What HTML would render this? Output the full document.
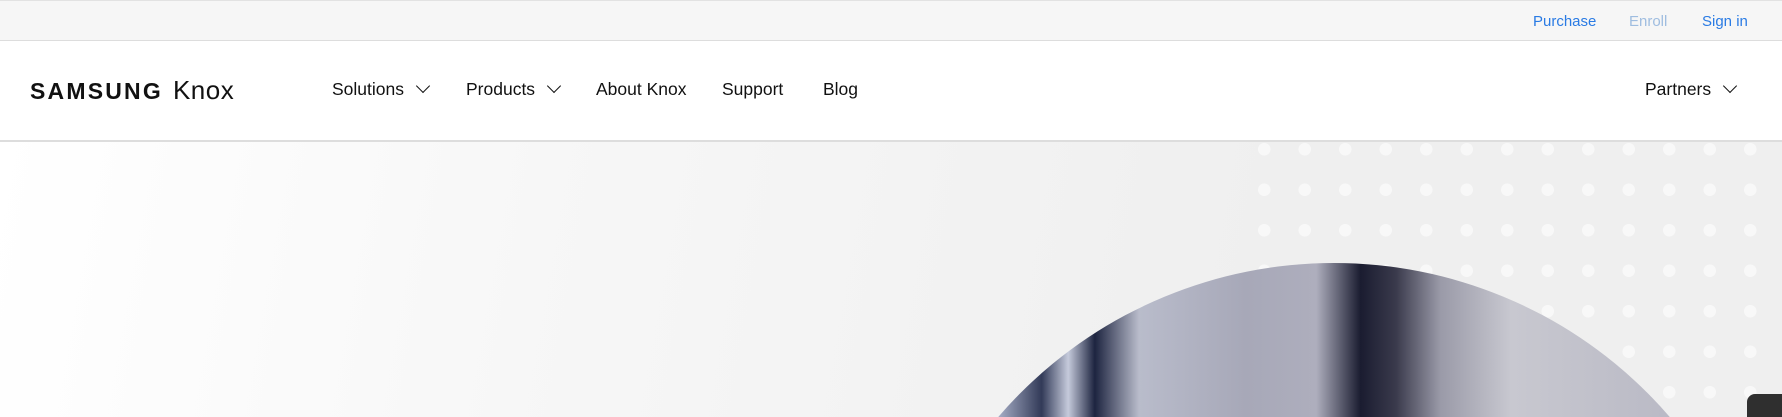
<!DOCTYPE html>
<html><head><meta charset="utf-8"><style>
*{margin:0;padding:0;box-sizing:border-box}
html,body{width:1782px;height:417px;overflow:hidden}
body{font-family:"Liberation Sans",sans-serif;position:relative;background:#fff}
.top{position:absolute;left:0;top:0;width:1782px;height:41px;background:#f6f6f6;border-top:1px solid #e2e2e2;border-bottom:1px solid #ddd}
.top span{position:absolute;top:12px;font-size:15px;color:#2a7be4}
.nav{position:absolute;left:0;top:41px;width:1782px;height:101px;background:#fff;border-bottom:2px solid #ddd}
.nav .it{position:absolute;top:38px;font-size:17.5px;color:#111}
.chev{display:inline-block;width:10px;height:10px;border-right:1.8px solid #111;border-bottom:1.8px solid #111;transform:rotate(45deg);margin-left:14px;position:relative;top:-4px}
.logo{position:absolute;left:30px;top:34px;font-size:23px;font-weight:bold;letter-spacing:2.2px;color:#111;white-space:nowrap}
.logo b{font-weight:normal;letter-spacing:0.5px;margin-left:10px;font-size:26px}
.hero{position:absolute;left:0;top:142px;width:1782px;height:275px;overflow:hidden;background:linear-gradient(100deg,#fff 0%,#f7f7f7 30%,#efefef 70%,#efefef 100%)}
.dots{position:absolute;left:1244px;top:1px;width:520px;height:274px;background-image:radial-gradient(circle,#f8f8f8 6px,transparent 6.5px);background-size:40.5px 40.5px;background-position:0 -14px}
.circ{position:absolute;left:891px;top:121px;width:886px;height:886px;border-radius:50%;overflow:hidden;background:linear-gradient(90deg,#5c6684 0%,#a9b0c8 12%,#323a58 17%,#c5cadb 20%,#1d2440 23%,#b9bccb 28%,#a7a8b8 40%,#aeaebd 48%,#1a1c30 53%,#3a3a4c 57%,#9a9aa8 62%,#c8c8d0 70%,#b0b0be 100%)}
.dark{position:absolute;left:1747px;top:394px;width:35px;height:23px;background:#2f2f2f;border-radius:8px 0 0 0}
</style></head><body>
<div class="top">
<span style="left:1533px">Purchase</span>
<span style="left:1629px;color:#9fbde0">Enroll</span>
<span style="left:1702px">Sign in</span>
</div>
<div class="nav">
<div class="logo">SAMSUNG<b>Knox</b></div>
<div class="it" style="left:332px">Solutions<span class="chev"></span></div>
<div class="it" style="left:466px">Products<span class="chev"></span></div>
<div class="it" style="left:596px">About Knox</div>
<div class="it" style="left:722px">Support</div>
<div class="it" style="left:823px">Blog</div>
<div class="it" style="left:1645px">Partners<span class="chev"></span></div>
</div>
<div class="hero"><div class="dots"></div><div class="circ"></div></div>
<div class="dark"></div>
</body></html>
